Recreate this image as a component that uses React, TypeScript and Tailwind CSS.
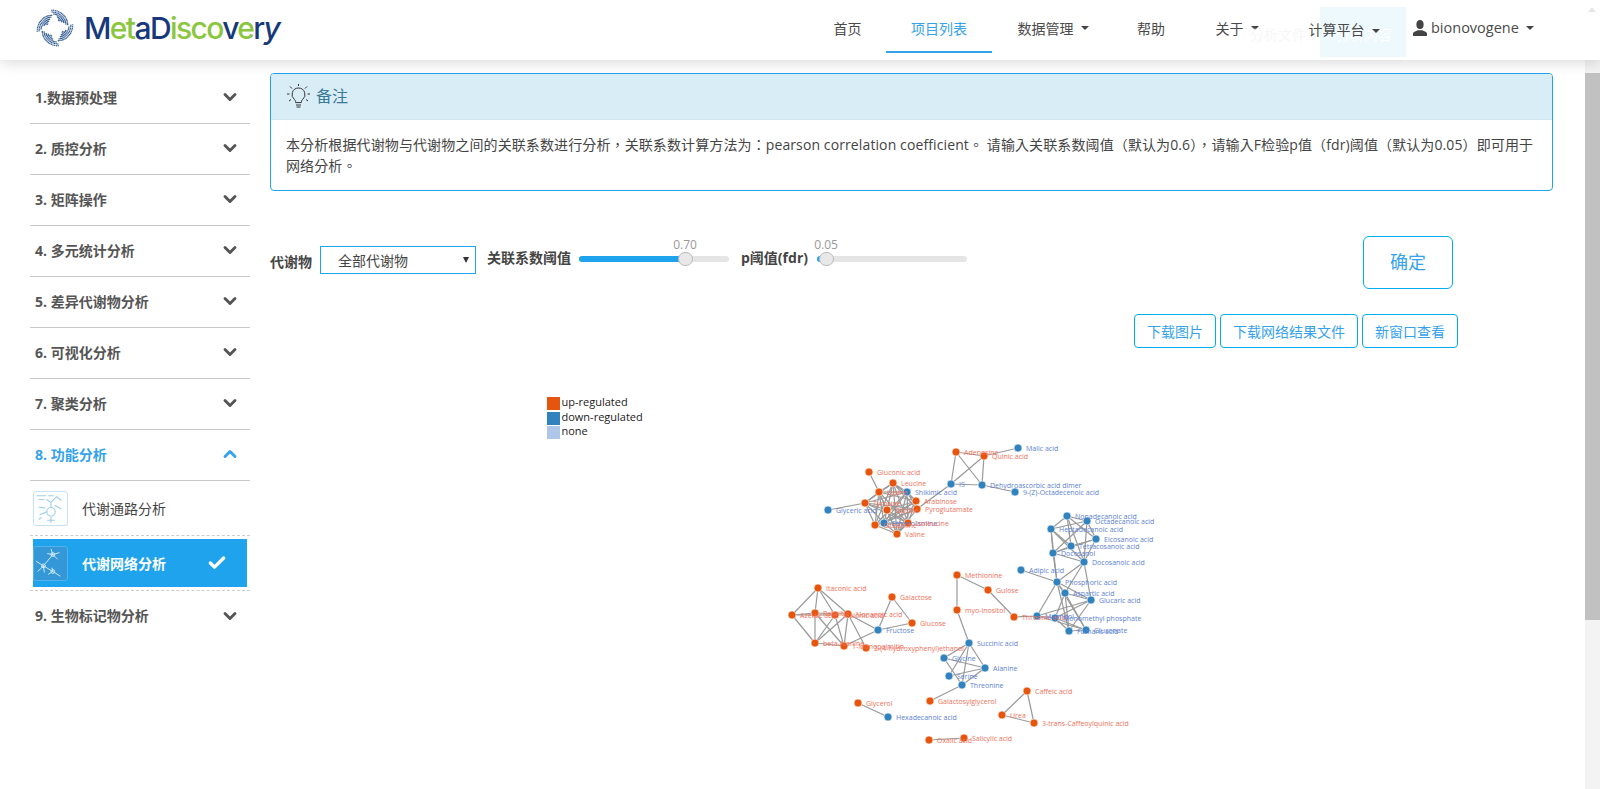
import React from "react";
import { ChevronDown, ChevronUp, Check } from "lucide-react";

const cn = '"Open Sans","Noto Sans CJK SC",sans-serif';
const cnTc = '"Open Sans","Noto Sans CJK TC",sans-serif';

const sidebar = [
  "1.数据预处理", "2. 质控分析", "3. 矩阵操作", "4. 多元统计分析", "5. 差异代谢物分析",
  "6. 可视化分析", "7. 聚类分析",
];

type N = [string, number, number, "u" | "d", number?];
const nodes: N[] = [
  ["Adenosine", 956, 452, "u"], ["Quinic acid", 984, 456, "u"], ["Malic acid", 1018, 448, "d"],
  ["IS", 951, 484, "d"], ["Dehydroascorbic acid dimer", 982, 485, "d"], ["9-(Z)-Octadecenoic acid", 1015, 492, "d"],
  ["Gluconic acid", 869, 472, "u"], ["Leucine", 893, 483, "u"], ["Lysine", 879, 492, "u"], ["Shikimic acid", 907, 492, "d"],
  ["Arabinose", 916, 501, "u"], ["Tyrosine", 865, 503, "u"], ["Glycine", 887, 510, "u"], ["Pyroglutamate", 917, 509, "u"],
  ["Glyceric acid", 828, 510, "d"], ["Ethanolamine", 884, 523, "d"], ["Isoleucine", 908, 523, "u"], ["Glutamine", 875, 525, "u"], ["Valine", 897, 534, "u"],
  ["Nonadecanoic acid", 1067, 516, "d"], ["Octadecanoic acid", 1087, 521, "d"], ["Heptadecanoic acid", 1051, 529, "d"],
  ["Eicosanoic acid", 1096, 539, "d"], ["Tetracosanoic acid", 1071, 546, "d"], ["Docosanol", 1053, 553, "d"],
  ["Docosanoic acid", 1084, 562, "d"], ["Adipic acid", 1021, 570, "d"], ["Phosphoric acid", 1057, 582, "d"],
  ["Aspartic acid", 1065, 593, "d"], ["Glucaric acid", 1091, 600, "d"], ["Threonic acid", 1014, 617, "u"],
  ["Mannitol", 1037, 616, "d"], ["Monomethyl phosphate", 1055, 618, "d"], ["Fumaric acid", 1069, 631, "d"], ["Gluconate", 1086, 630, "d"],
  ["Methionine", 957, 575, "u"], ["Gulose", 988, 590, "u"], ["myo-inositol", 957, 610, "u"],
  ["Itaconic acid", 818, 588, "u"], ["Galactose", 892, 597, "u"], ["Glucose", 912, 623, "u"], ["Fructose", 878, 630, "d"],
  ["Azelaic acid", 792, 615, "u"], ["Palmitic", 815, 613, "u"], ["Malonic acid", 835, 615, "u"], ["Nonanoic acid", 848, 614, "u"],
  ["beta-Alanine", 815, 643, "u"], ["1-Monopalmitin", 844, 646, "u"], ["2-(4-hydroxyphenyl)ethanol", 866, 648, "u"],
  ["Succinic acid", 969, 643, "d"], ["Glycine", 944, 658, "d"], ["Alanine", 985, 668, "d"], ["Serine", 949, 676, "d"], ["Threonine", 962, 685, "d"],
  ["Galactosylglycerol", 930, 701, "u"], ["Glycerol", 858, 703, "u"], ["Hexadecanoic acid", 888, 717, "d"],
  ["Caffeic acid", 1027, 691, "u"], ["Urea", 1002, 715, "u"], ["3-trans-Caffeoylquinic acid", 1034, 723, "u"],
  ["Oxalic acid", 929, 740, "u"], ["Salicylic acid", 964, 738, "u"],
];

const idx = (name: string, from = 0) => nodes.findIndex((n, i) => i >= from && n[0] === name);
const E = (a: string, b: string): [number, number] => [idx(a), idx(b)];
const edges: [number, number][] = [
  E("Adenosine", "Quinic acid"), E("Adenosine", "IS"), E("Adenosine", "Dehydroascorbic acid dimer"), E("Quinic acid", "Malic acid"),
  E("Quinic acid", "IS"), E("Quinic acid", "Dehydroascorbic acid dimer"), E("IS", "Dehydroascorbic acid dimer"),
  E("Dehydroascorbic acid dimer", "9-(Z)-Octadecenoic acid"), E("IS", "Pyroglutamate"),
  E("Gluconic acid", "Lysine"), E("Glyceric acid", "Tyrosine"),
  E("Methionine", "myo-inositol"), E("Methionine", "Gulose"), E("Gulose", "Threonic acid"), E("myo-inositol", "Succinic acid"),
  E("Threonic acid", "Mannitol"), E("Adipic acid", "Phosphoric acid"),
  E("Itaconic acid", "Azelaic acid"), E("Itaconic acid", "Malonic acid"), E("Itaconic acid", "Palmitic"), E("Itaconic acid", "Nonanoic acid"),
  E("Azelaic acid", "Palmitic"), E("Azelaic acid", "Malonic acid"), E("Azelaic acid", "beta-Alanine"), E("Palmitic", "beta-Alanine"), E("Palmitic", "1-Monopalmitin"),
  E("Palmitic", "Nonanoic acid"), E("Malonic acid", "beta-Alanine"), E("Malonic acid", "1-Monopalmitin"), E("Nonanoic acid", "beta-Alanine"),
  E("Nonanoic acid", "1-Monopalmitin"), E("Nonanoic acid", "2-(4-hydroxyphenyl)ethanol"), E("Nonanoic acid", "Fructose"), E("beta-Alanine", "1-Monopalmitin"),
  E("1-Monopalmitin", "Fructose"), E("Galactose", "Fructose"), E("Galactose", "Glucose"), E("Fructose", "Glucose"),
  E("Succinic acid", "Alanine"), E("Succinic acid", "Threonine"), E("Succinic acid", "Serine"), E("Galactosylglycerol", "Threonine"),
  E("Alanine", "Threonine"), E("Alanine", "Serine"), E("Glycerol", "Hexadecanoic acid"),
  E("Caffeic acid", "Urea"), E("Caffeic acid", "3-trans-Caffeoylquinic acid"), E("Urea", "3-trans-Caffeoylquinic acid"), E("Oxalic acid", "Salicylic acid"),
];
const gly2 = idx("Glycine", 20);
const succ = idx("Succinic acid");
edges.push([gly2, succ], [gly2, idx("Alanine")], [gly2, idx("Threonine")]);
const clique = (names: string[], skip = 1) => {
  names.forEach((a, i) => names.forEach((b, j) => { if (j > i && (i + j) % skip !== 0) edges.push([idx(a), idx(b)]); }));
};
clique(["Leucine", "Lysine", "Shikimic acid", "Arabinose", "Tyrosine", "Glycine", "Pyroglutamate", "Ethanolamine", "Isoleucine", "Glutamine", "Valine"], 7);
clique(["Nonadecanoic acid", "Octadecanoic acid", "Heptadecanoic acid", "Eicosanoic acid", "Tetracosanoic acid", "Docosanol", "Docosanoic acid"], 5);
clique(["Phosphoric acid", "Aspartic acid", "Glucaric acid", "Mannitol", "Monomethyl phosphate", "Fumaric acid", "Gluconate"], 4);
edges.push(E("Docosanol", "Phosphoric acid"), E("Docosanoic acid", "Phosphoric acid"), E("Docosanoic acid", "Glucaric acid"), E("Docosanoic acid", "Aspartic acid"), E("Heptadecanoic acid", "Phosphoric acid"));

function Graph() {
  return (
    <svg width="640" height="380" viewBox="540 390 640 380" className="block">
      <g fontFamily={cn} fontSize="11">
        <rect x="547" y="397" width="13" height="13" fill="#e6550d" />
        <rect x="547" y="412" width="13" height="13" fill="#3182bd" />
        <rect x="547" y="426" width="13" height="13" fill="#aec7e8" />
        <text x="561.5" y="406" fill="#222">up-regulated</text>
        <text x="561.5" y="421" fill="#222">down-regulated</text>
        <text x="561.5" y="435" fill="#222">none</text>
      </g>
      <g stroke="#999" strokeWidth="1.2">
        {edges.map(([a, b], i) => (
          <line key={i} x1={nodes[a][1]} y1={nodes[a][2]} x2={nodes[b][1]} y2={nodes[b][2]} />
        ))}
      </g>
      {nodes.map((n, i) => (
        <circle key={i} cx={n[1]} cy={n[2]} r="4" fill={n[3] === "u" ? "#e6550d" : "#3182bd"} stroke="#fff" strokeWidth="0.6" />
      ))}
      <g fontFamily={cn} fontSize="7">
        {nodes.map((n, i) => (
          <text key={i} x={n[1] + 8} y={n[2] + 2.5} fill={n[3] === "u" ? "#f0705a" : "#5d7fd0"}>{n[0]}</text>
        ))}
      </g>
    </svg>
  );
}

const swirlDots = (() => {
  const out: { x: number; y: number }[] = [];
  for (let s = 0; s < 16; s++) {
    const t = s / 15;
    const a = (-100 + t * 85) * (Math.PI / 180);
    const rows = 1 + Math.round((1 - Math.abs(t - 0.45) * 1.6) * 4);
    for (let k = 0; k < rows; k++) {
      const r = 18.5 - t * 5 - k * 1.9;
      out.push({ x: Math.cos(a) * r, y: Math.sin(a) * r });
    }
  }
  return out;
})();

function Logo() {
  return (
    <div className="flex items-center">
      <svg width="38" height="38" viewBox="-19.500 -19.500 39 39" className="shrink-0">
        {[0, 90, 180, 270].map((r) => (
          <g key={r} transform={`rotate(${r})`} fill="#2f5a92">
            {swirlDots.map((d, i) => <circle key={i} cx={d.x} cy={d.y} r="0.75" />)}
          </g>
        ))}
      </svg>
      <div className="ml-[10px] whitespace-nowrap text-[30px] font-medium leading-none tracking-[-1.6px]" style={{ fontFamily: 'Inter,sans-serif' }}>
        <span className="text-[#17387a]">M</span><span className="text-[#8cc63f]">et</span><span className="text-[#17387a]">aD</span><span className="text-[#8cc63f]">isco</span><span className="text-[#17387a]">v</span><span className="text-[#8cc63f]">e</span><span className="text-[#17387a]">r</span><span className="italic text-[#17387a]">y</span>
      </div>
    </div>
  );
}

function Caret() {
  return <span className="ml-[7px] inline-block h-0 w-0 border-x-[4px] border-t-[4px] border-x-transparent border-t-[#444] align-middle" />;
}

function NavItem({ w, active, caret, children }: { w: number; active?: boolean; caret?: boolean; children: React.ReactNode }) {
  return (
    <div
      className={`flex h-[53px] items-center justify-center border-b-2 pt-[5px] text-[14px] ${active ? "border-[#35a2ec] text-[#35a2ec]" : "border-transparent text-[#4a4a4a]"}`}
      style={{ width: w }}
    >
      {children}
      {caret && <Caret />}
    </div>
  );
}

function Slider({ value, pct, width }: { value: string; pct: number; width: number }) {
  return (
    <div className="relative mb-[8px] h-[6px] rounded-full bg-[#e5e5e5]" style={{ width }}>
      <div className="h-full rounded-full bg-[#1fa3ec]" style={{ width: pct }} />
      <div className="absolute top-[-4px] h-[14px] w-[15px] rounded-full border border-[#bbb] bg-[#e8e8e8]" style={{ left: pct - 7 }} />
      <span className="absolute top-[-20px] w-[40px] text-center text-[12px] text-[#999]" style={{ left: pct - 20 }}>{value}</span>
    </div>
  );
}

function NavRow({ label, active, up, last }: { label: string; active?: boolean; up?: boolean; last?: boolean }) {
  return (
    <div className={`flex h-[51px] items-center justify-between pb-[2px] pl-[5px] pr-[10px] text-[14px] font-bold ${last ? "" : "border-b-[1.5px] border-[#c8c8c8]"} ${active ? "text-[#35a2ec]" : "text-[#555]"}`}>
      <span>{label}</span>
      {up ? <ChevronUp size={20} strokeWidth={3.5} color="#35a2ec" /> : <ChevronDown size={20} strokeWidth={3.5} color="#555" />}
    </div>
  );
}

function PathIcon() {
  return (
    <svg width="35" height="35" viewBox="0 0 35 35" className="rounded-[3px] border border-[#c5e3f5]" fill="none" stroke="#9dcdec" strokeWidth="1.2">
      <path d="M3 4h10M15 4h6M5 8h6M13 8l5 3 6-6 5 4M18 11v5M5 16l7 1M22 14l7 4" />
      <circle cx="18" cy="21" r="4.500" />
      <path d="M6 24l8-3M18 26v7M14 30h8M8 27l-3 2" />
    </svg>
  );
}

function NetIcon() {
  return (
    <svg width="35" height="35" viewBox="0 0 35 35" className="rounded-[3px] border border-[#55b2e8] bg-[#3498d8]" fill="none" stroke="#d6ecfa" strokeWidth="1">
      <path d="M20 8L10 20M20 8l-6-1M20 8l7-2M20 8l-2-6M20 8l5 5M10 20l-8-5M10 20l-6 6M10 20l1 7M10 20l10 6M20 26l-5 3M20 26l8 5M20 26l-1-4" />
      <circle cx="20" cy="8" r="2" />
      <circle cx="10" cy="20" r="2" />
      <circle cx="20" cy="26" r="2" />
    </svg>
  );
}

function Bulb() {
  return (
    <svg width="23" height="25" viewBox="0 0 23 25" fill="none" stroke="#333" strokeWidth="1">
      <path d="M11.500 4a6.500 6.500 0 0 0-4 11.600c.9.8 1.200 1.900 1.200 3h5.600c0-1.100.3-2.200 1.200-3A6.500 6.500 0 0 0 11.500 4z" />
      <path d="M9 21h5M9.500 23h4M0 10h2.500M20.500 10H23M3 2.500l2 2M20 2.500l-2 2M2 17l2-1.500M21 17l-2-1.500M11.500 0v2" />
    </svg>
  );
}

function UserGlyph() {
  return (
    <svg width="14" height="16" viewBox="0 0 14 16" fill="#444">
      <ellipse cx="7" cy="4.500" rx="3.600" ry="4.500" />
      <path d="M0 16v-2.500c0-1.600 2.500-2.300 4.800-3.300h4.400c2.300 1 4.800 1.700 4.800 3.300V16z" />
    </svg>
  );
}

function Btn({ w, children }: { w: number; children: React.ReactNode }) {
  return (
    <div className="flex h-[34px] items-center justify-center rounded-[4px] border border-[#00aeef] text-[14px] text-[#35a2ec]" style={{ width: w }}>
      {children}
    </div>
  );
}

export default function App() {
  return (
    <div className="relative h-[789px] w-[1600px] overflow-hidden bg-white" style={{ fontFamily: cn }}>
      <div className="absolute right-0 top-0 h-full w-[15px] bg-[#f3f3f3]">
        <div className="absolute top-[73px] h-[547px] w-full bg-[#c1c1c1]" />
      </div>

      <header className="relative z-10 flex h-[60px] items-start justify-between bg-white pl-[36px] pr-[60px] shadow-[0_2px_14px_rgba(0,0,0,0.16)]">
        <div className="pt-[9px]"><Logo /></div>
        <nav className="flex items-start">
          <NavItem w={77}>首页</NavItem>
          <NavItem w={106} active>项目列表</NavItem>
          <NavItem w={122} caret>数据管理</NavItem>
          <NavItem w={74}>帮助</NavItem>
          <div className="relative">
            <NavItem w={98} caret>关于</NavItem>
            <span className="absolute left-[62px] top-[24px] whitespace-nowrap text-[14px] text-[#f7f7f7]">分析文件</span>
          </div>
          <div className="relative flex h-[53px] w-[116px] items-center justify-center pt-[5px] text-[14px] text-[#4a4a4a]">
            <div className="absolute left-[34px] top-[7px] h-[50px] w-[86px] bg-[#eef9fd]" />
            <span className="absolute left-[50px] top-[24px] whitespace-nowrap text-white">分析内容</span>
            <span className="relative">计算平台</span>
            <span className="relative"><Caret /></span>
          </div>
          <div className="flex h-[53px] w-[138px] items-center pl-[11px] pt-[3px] text-[14.500px] text-[#4a4a4a]">
            <UserGlyph />
            <span className="ml-[4px]">bionovogene</span>
            <Caret />
          </div>
        </nav>
      </header>
      <div className="absolute right-[4px] top-[7px] z-20 h-0 w-0 border-x-[4px] border-b-[5px] border-x-transparent border-b-[#e6e6e6]" />

      <div className="flex">
        <aside className="ml-[30px] mt-[13px] w-[220px] shrink-0">
          {sidebar.map((s) => <NavRow key={s} label={s} />)}
          <NavRow label="8. 功能分析" active up />
          <div className="flex h-[55px] items-center border-b border-dashed border-[#ccc] pl-[3px] text-[14px] text-[#444]">
            <PathIcon />
            <span className="ml-[14px]">代谢通路分析</span>
          </div>
          <div className="border-b border-dashed border-[#ccc] py-[3px]">
            <div className="ml-[3px] flex h-[48px] w-[214px] items-center justify-between bg-[#1fa3ec] pr-[20px] text-[14px] font-bold text-white">
              <div className="flex items-center">
                <NetIcon />
                <span className="ml-[14px]">代谢网络分析</span>
              </div>
              <Check size={20} strokeWidth={4} />
            </div>
          </div>
          <NavRow label="9. 生物标记物分析" last />
        </aside>

        <main className="ml-[20px] flex-1 pr-[47px] pt-[13px]">
          <section className="overflow-hidden rounded-[4px] border border-[#1fa3ec]">
            <div className="flex h-[46px] items-center gap-[6px] border-b border-[#cfe7f3] bg-[#d9edf7] pl-[16px] text-[16px] text-[#3a7a96]">
              <Bulb />
              <span className="mb-[2px]">备注</span>
            </div>
            <p className="whitespace-nowrap px-[15px] py-[14px] text-[14px] leading-[21px] tracking-[0.11px] text-[#444]" style={{ fontFamily: cnTc }}>
              本分析根据代谢物与代谢物之间的关联系数进行分析，关联系数计算方法为：pearson correlation coefficient。 请输入关联系数阈值（默认为0.6），请输入F检验p值（fdr)阈值（默认为0.05）即可用于<br />网络分析。
            </p>
          </section>

          <div className="mt-[45px] flex h-[53px] items-center">
            <div className="mb-[5px] flex items-center">
              <span className="mt-[2px] w-[50px] text-[14px] font-bold text-[#444]">代谢物</span>
              <div className="flex h-[28px] w-[156px] items-center justify-between border border-[#1fa3ec] pl-[17px] pr-[6px] text-[14px] text-[#444]">
                全部代谢物
                <span className="h-0 w-0 border-x-[3.500px] border-t-[6px] border-x-transparent border-t-[#333]" />
              </div>
            </div>
            <span className="mb-[11px] ml-[11px] w-[92px] text-[14px] font-bold text-[#444]">关联系数阈值</span>
            <Slider value="0.70" pct={106} width={150} />
            <span className="mb-[11px] ml-[12px] w-[76px] text-[14px] font-bold text-[#444]">p阈值(fdr)</span>
            <Slider value="0.05" pct={9} width={150} />
            <div className="ml-auto mr-[100px] flex h-[53px] w-[90px] items-center justify-center rounded-[6px] border border-[#00aeef] text-[18px] text-[#35a2ec]">确定</div>
          </div>

          <div className="mr-[95px] mt-[25px] flex justify-end gap-[4px]">
            <Btn w={82}>下载图片</Btn>
            <Btn w={138}>下载网络结果文件</Btn>
            <Btn w={96}>新窗口查看</Btn>
          </div>

          <div className="ml-[270px] mt-[42px]"><Graph /></div>
        </main>
      </div>
    </div>
  );
}
